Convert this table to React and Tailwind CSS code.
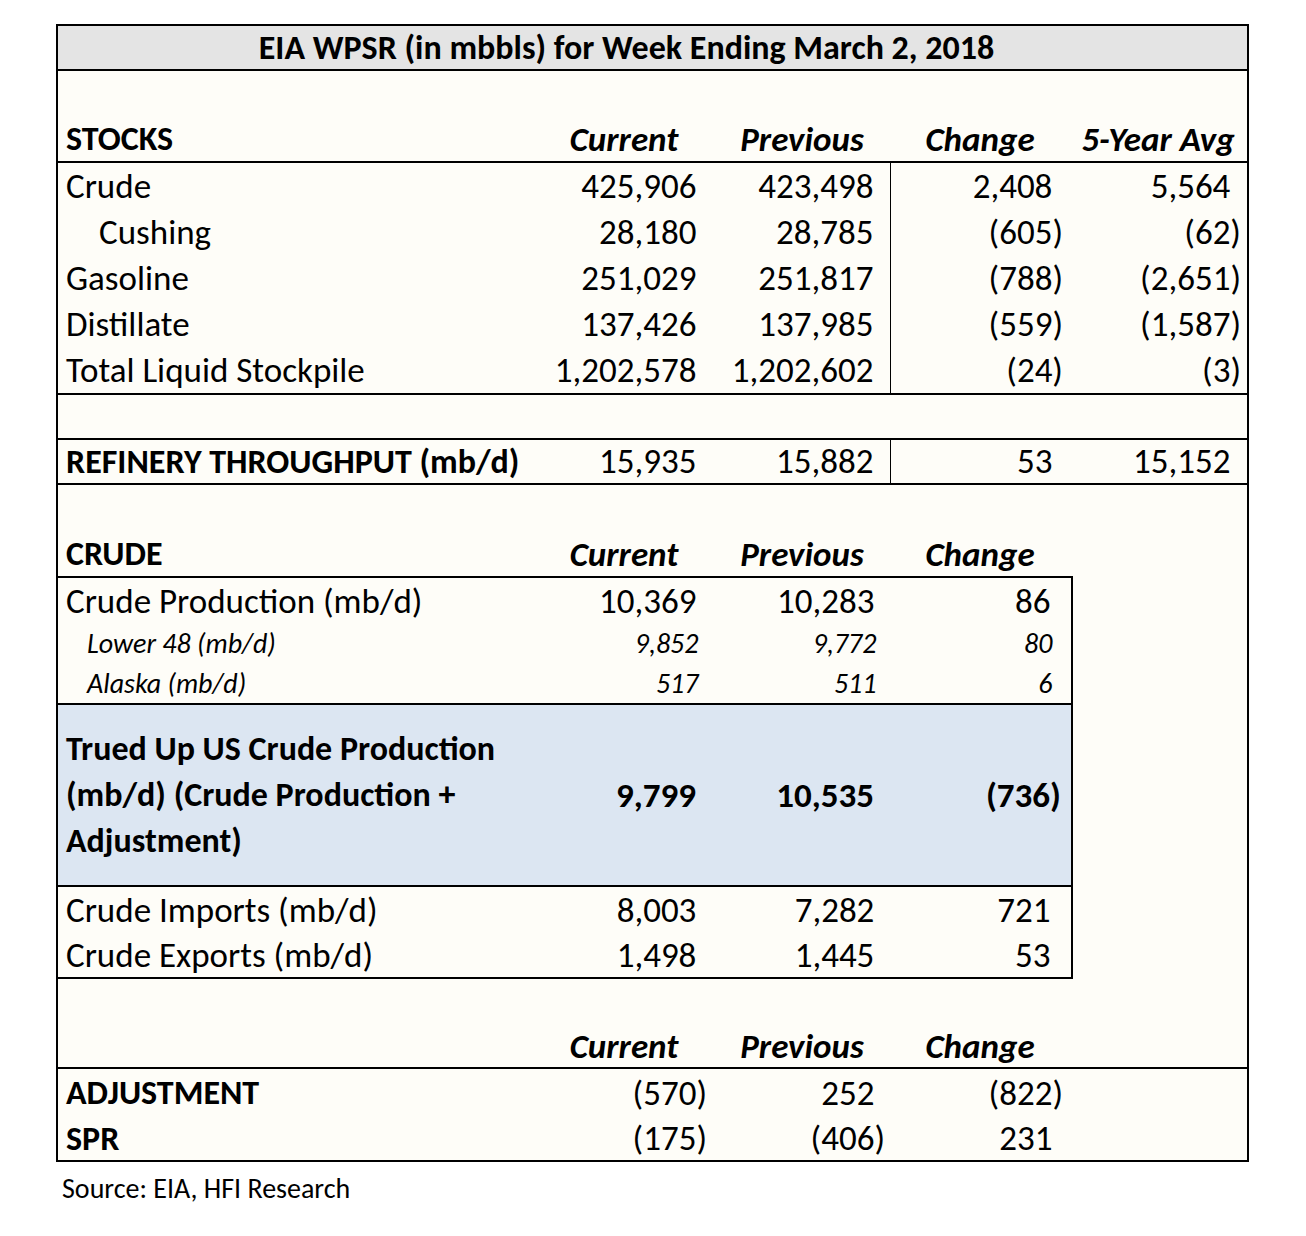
const FONT = { fontFamily: 'Carlito, Lato, "Open Sans", sans-serif' }
const COLS = 'grid grid-cols-[477px_178px_178px_178px_178px]'

function Num({ v, italic, bold, className = '' }) {
  const neg = v.startsWith('(')
  return (
    <div className={`text-right pr-[6px] ${italic ? 'italic' : ''} ${bold ? 'font-bold' : ''} ${className}`}>
      {v}
      {!neg && <span className="invisible">)</span>}
    </div>
  )
}

function Head({ children }) {
  return <div className="text-center font-bold italic">{children}</div>
}

function StockRow({ label, vals, indent }) {
  return (
    <div className={`${COLS} h-[46px] items-center`}>
      <div className={indent ? 'pl-[41px]' : 'pl-[8px]'}>{label}</div>
      <Num v={vals[0]} />
      <div className="h-full flex items-center justify-end border-r border-black">
        <Num v={vals[1]} />
      </div>
      <Num v={vals[2]} />
      <Num v={vals[3]} />
    </div>
  )
}

const BOX = 'grid grid-cols-[477px_178px_178px_176px]'

function CrudeRow({ label, vals, small, h = 'h-[46px]' }) {
  return (
    <div className={`${BOX} ${h} items-center ${small ? 'text-[28px] italic' : ''}`}>
      <div className={small ? 'pl-[29px]' : 'pl-[8px]'}>{label}</div>
      {vals.map((v, i) => (
        <Num key={i} v={v} className={small ? 'pr-[6px]' : ''} />
      ))}
    </div>
  )
}

export default function App() {
  return (
    <div className="bg-white min-h-[1236px] pt-[24px] pl-[56px] text-black" style={FONT}>
      <div className="w-[1193px] border-2 border-black bg-[#fefdf8] text-[35px] leading-none">
        <div className="h-[45px] bg-[#e4e4e4] border-b-2 border-black flex items-center justify-center pr-[52px] font-bold text-[34px]">
          EIA WPSR (in mbbls) for Week Ending March 2, 2018
        </div>

        <div className="h-[46px]" />
        <div className={`${COLS} h-[46px] items-center border-b-2 border-black`}>
          <div className="pl-[8px] font-bold text-[34px]">STOCKS</div>
          <Head>Current</Head>
          <Head>Previous</Head>
          <Head>Change</Head>
          <Head>5-Year Avg</Head>
        </div>
        <StockRow label="Crude" vals={['425,906', '423,498', '2,408', '5,564']} />
        <StockRow label="Cushing" indent vals={['28,180', '28,785', '(605)', '(62)']} />
        <StockRow label="Gasoline" vals={['251,029', '251,817', '(788)', '(2,651)']} />
        <StockRow label="Distillate" vals={['137,426', '137,985', '(559)', '(1,587)']} />
        <div className="border-b-2 border-black">
          <StockRow label="Total Liquid Stockpile" vals={['1,202,578', '1,202,602', '(24)', '(3)']} />
        </div>
        <div className="h-[45px] border-b-2 border-black" />
        <div className="border-b-2 border-black">
          <div className={`${COLS} h-[43px] items-center`}>
            <div className="pl-[8px] font-bold text-[34px]">REFINERY THROUGHPUT (mb/d)</div>
            <Num v="15,935" />
            <div className="h-full flex items-center justify-end border-r border-black">
              <Num v="15,882" />
            </div>
            <Num v="53" />
            <Num v="15,152" />
          </div>
        </div>

        <div className="h-[47px]" />
        <div className={`${COLS} h-[44px] items-center`}>
          <div className="pl-[8px] font-bold text-[34px]">CRUDE</div>
          <Head>Current</Head>
          <Head>Previous</Head>
          <Head>Change</Head>
          <div />
        </div>
        <div className="w-[1015px] border-t-2 border-r-2 border-b-2 border-black">
          <CrudeRow label="Crude Production (mb/d)" vals={['10,369', '10,283', '86']} />
          <CrudeRow label="Lower 48 (mb/d)" small h="h-[40px]" vals={['9,852', '9,772', '80']} />
          <CrudeRow label="Alaska (mb/d)" small h="h-[39px]" vals={['517', '511', '6']} />
          <div className={`${BOX} h-[184px] items-center bg-[#dce6f2] border-y-2 border-black font-bold`}>
            <div className="pl-[8px] leading-[46px] text-[34px]">
              Trued Up US Crude Production
              <br />
              (mb/d) (Crude Production +
              <br />
              Adjustment)
            </div>
            <Num v="9,799" />
            <Num v="10,535" />
            <Num v="(736)" />
          </div>
          <CrudeRow label="Crude Imports (mb/d)" vals={['8,003', '7,282', '721']} />
          <CrudeRow label="Crude Exports (mb/d)" h="h-[44px]" vals={['1,498', '1,445', '53']} />
        </div>

        <div className="h-[46px]" />
        <div className={`${COLS} h-[44px] items-center border-b-2 border-black`}>
          <div />
          <Head>Current</Head>
          <Head>Previous</Head>
          <Head>Change</Head>
          <div />
        </div>
        <div className={`${COLS} h-[48px] items-center`}>
          <div className="pl-[8px] font-bold text-[34px]">ADJUSTMENT</div>
          <Num v="(570)" />
          <Num v="252" />
          <Num v="(822)" />
          <div />
        </div>
        <div className={`${COLS} h-[43px] items-center`}>
          <div className="pl-[8px] font-bold text-[34px]">SPR</div>
          <Num v="(175)" />
          <Num v="(406)" />
          <Num v="231" />
          <div />
        </div>
      </div>
      <div className="pl-[6px] pt-[13px] text-[28px] leading-none">Source: EIA, HFI Research</div>
    </div>
  )
}
